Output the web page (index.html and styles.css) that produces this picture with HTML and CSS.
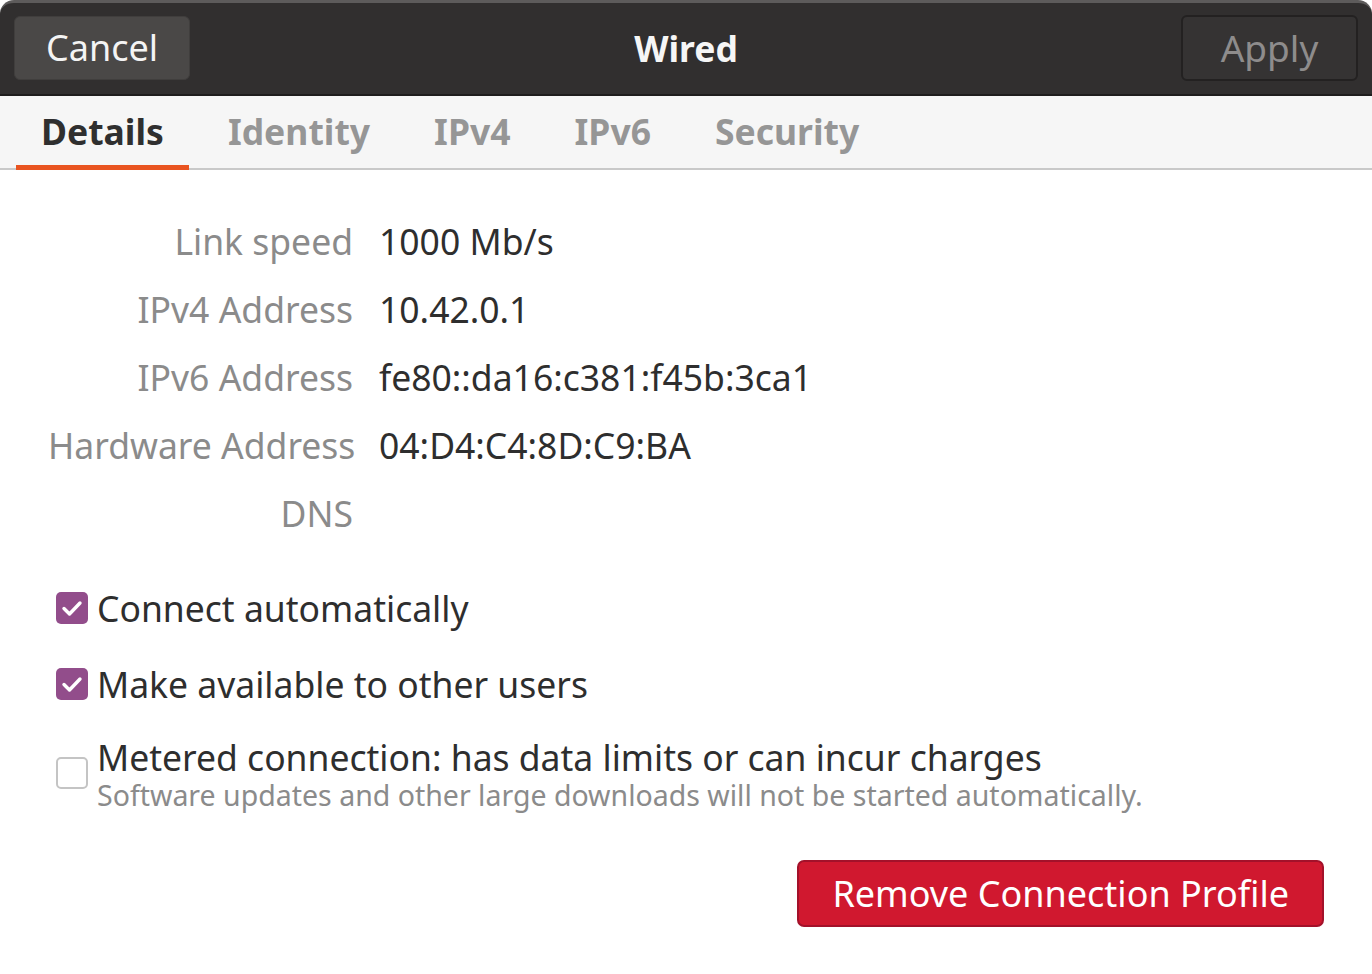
FILE: index.html
```html
<!DOCTYPE html>
<html>
<head>
<meta charset="utf-8">
<link rel="stylesheet" href="styles.css">
</head>
<body>
<div class="window">
  <header class="headerbar">
    <div class="hb-start"><button class="btn btn-cancel">Cancel</button></div>
    <div class="hb-title">Wired</div>
    <div class="hb-end"><button class="btn btn-apply">Apply</button></div>
  </header>
  <nav class="tabs">
    <div class="tab active">Details</div>
    <div class="tab">Identity</div>
    <div class="tab">IPv4</div>
    <div class="tab">IPv6</div>
    <div class="tab">Security</div>
  </nav>
  <main class="content">
    <div class="details">
      <div class="lbl">Link speed</div><div class="val">1000 Mb/s</div>
      <div class="lbl">IPv4 Address</div><div class="val">10.42.0.1</div>
      <div class="lbl">IPv6 Address</div><div class="val">fe80::da16:c381:f45b:3ca1</div>
      <div class="lbl">Hardware Address</div><div class="val">04:D4:C4:8D:C9:BA</div>
      <div class="lbl">DNS</div><div class="val"></div>
    </div>
    <div class="checks">
      <div class="check">
        <span class="box on"><svg viewBox="0 0 32 32" width="32" height="32"><path d="M8 16.5l5.5 5.5 10.5-11" fill="none" stroke="#fff" stroke-width="3.4" stroke-linecap="round" stroke-linejoin="round"/></svg></span>
        <span class="check-text">Connect automatically</span>
      </div>
      <div class="check">
        <span class="box on"><svg viewBox="0 0 32 32" width="32" height="32"><path d="M8 16.5l5.5 5.5 10.5-11" fill="none" stroke="#fff" stroke-width="3.4" stroke-linecap="round" stroke-linejoin="round"/></svg></span>
        <span class="check-text">Make available to other users</span>
      </div>
      <div class="check metered">
        <span class="box off"></span>
        <span class="check-text-wrap">
          <span class="check-text">Metered connection: has data limits or can incur charges</span>
          <span class="check-sub">Software updates and other large downloads will not be started automatically.</span>
        </span>
      </div>
    </div>
    <div class="actions">
      <button class="btn-remove">Remove Connection Profile</button>
    </div>
  </main>
</div>
</body>
</html>
```
FILE: styles.css
```css
* { box-sizing: border-box; }
html, body { margin: 0; padding: 0; }
body {
  width: 1372px;
  height: 974px;
  background: #ffffff;
  font-family: "Noto Sans", "Open Sans", sans-serif;
  overflow: hidden;
}
.window {
  width: 1372px;
  height: 974px;
  background: #ffffff;
  display: flex;
  flex-direction: column;
}
.headerbar {
  height: 96px;
  background: #312f2f;
  border-top: 3px solid #5d5b5b;
  border-bottom: 2px solid #1f1d1d;
  border-radius: 14px 14px 0 0;
  display: grid;
  grid-template-columns: 1fr auto 1fr;
  align-items: center;
  padding: 0 14px;
}
.hb-end { display: flex; justify-content: flex-end; }
.btn {
  font-family: inherit;
  font-size: 36px;
  border-radius: 6px;
  padding: 0;
  line-height: 1;
}
.btn-cancel {
  width: 176px;
  height: 64px;
  margin-top: -2px;
  background: #4a4847;
  color: #f4f4f4;
  border: 1px solid #403e3d;
}
.btn-apply {
  width: 177px;
  height: 66px;
  margin-top: -2px;
  background: #353333;
  color: #8e8c8c;
  border: 2px solid #232121;
  font-size: 37px;
}
.hb-title {
  color: #f6f6f6;
  font-weight: bold;
  font-size: 35.5px;
  margin-top: -2px;
}
.tabs {
  height: 74px;
  background: #f6f6f6;
  border-bottom: 2px solid #c9c9c9;
  display: flex;
  padding-left: 16px;
  gap: 14px;
}
.tab {
  padding: 0 25px;
  display: flex;
  align-items: center;
  font-weight: bold;
  font-size: 35.5px;
  color: #969696;
  border-bottom: 5px solid transparent;
  margin-bottom: -2px;
}
.tab.active {
  color: #2f2f2f;
  border-bottom-color: #e95420;
}
.content {
  flex: 1;
  display: flex;
  flex-direction: column;
}
.details {
  display: grid;
  grid-template-columns: 305px auto;
  column-gap: 26px;
  padding-left: 48px;
  padding-top: 37px;
  grid-auto-rows: 68px;
  align-items: center;
  font-size: 35.5px;
}
.lbl { text-align: right; color: #8b8b8b; white-space: nowrap; }
.val { color: #2e2e2e; white-space: nowrap; }
.checks {
  margin-top: 43px;
  padding-left: 56px;
  display: flex;
  flex-direction: column;
  gap: 40px;
}
.check {
  display: flex;
  align-items: center;
  gap: 9px;
  height: 36px;
}
.check.metered {
  height: auto;
  margin-top: -4px;
  align-items: flex-start;
}
.check.metered .box { margin-top: 19px; }
.box {
  width: 32px;
  height: 32px;
  border-radius: 5px;
  flex: none;
}
.box svg { display: block; }
.box.on { background: #924d8b; }
.box.off { border: 2px solid #c4c4c4; background: #ffffff; }
.check-text { font-size: 35.5px; color: #2e2e2e; line-height: 38px; white-space: nowrap; }
.check-text-wrap { display: flex; flex-direction: column; }
.check-sub { font-size: 28.5px; color: #8b8b8b; line-height: 38px; white-space: nowrap; }
.actions {
  display: flex;
  justify-content: flex-end;
  padding-right: 48px;
  margin-top: 46px;
}
.btn-remove {
  font-family: inherit;
  font-size: 36px;
  color: #ffffff;
  background: #d0182f;
  border: 2px solid #a3112a;
  border-radius: 7px;
  height: 67px;
  padding: 0 33px;
}
```
